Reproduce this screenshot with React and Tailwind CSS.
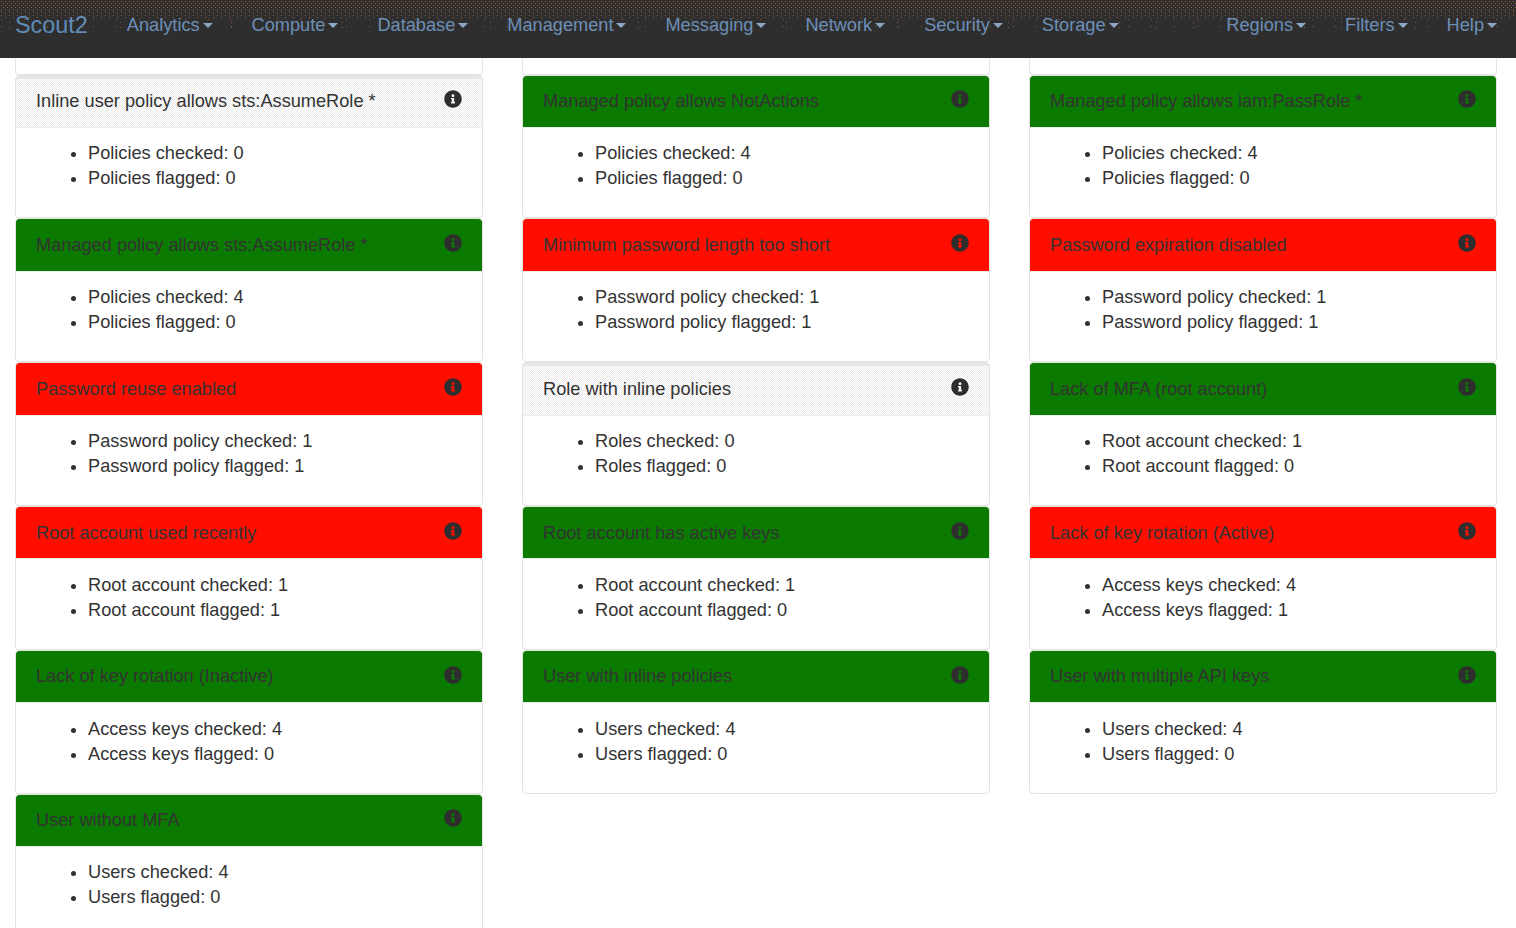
import React from "react";
import { FaInfoCircle } from "react-icons/fa";

const left = ["Analytics", "Compute", "Database", "Management", "Messaging", "Network", "Security", "Storage"];
const right = ["Regions", "Filters", "Help"];

const rows = [
  [
    ["gray", "Inline user policy allows sts:AssumeRole *", "Policies", 0, 0],
    ["green", "Managed policy allows NotActions", "Policies", 4, 0],
    ["green", "Managed policy allows iam:PassRole *", "Policies", 4, 0],
  ],
  [
    ["green", "Managed policy allows sts:AssumeRole *", "Policies", 4, 0],
    ["red", "Minimum password length too short", "Password policy", 1, 1],
    ["red", "Password expiration disabled", "Password policy", 1, 1],
  ],
  [
    ["red", "Password reuse enabled", "Password policy", 1, 1],
    ["gray", "Role with inline policies", "Roles", 0, 0],
    ["green", "Lack of MFA (root account)", "Root account", 1, 0],
  ],
  [
    ["red", "Root account used recently", "Root account", 1, 1],
    ["green", "Root account has active keys", "Root account", 1, 0],
    ["red", "Lack of key rotation (Active)", "Access keys", 4, 1],
  ],
  [
    ["green", "Lack of key rotation (Inactive)", "Access keys", 4, 0],
    ["green", "User with inline policies", "Users", 4, 0],
    ["green", "User with multiple API keys", "Users", 4, 0],
  ],
  [["green", "User without MFA", "Users", 4, 0]],
];

const headingTone = {
  gray: "border-t-[3px] border-[#e5e6e5] bg-[repeating-conic-gradient(#ffffff_0_25%,#ebebeb_0_50%)] bg-[length:2px_2px]",
  green: "bg-[#0a7a00]",
  red: "bg-[#ff0e00]",
};

function NavItem({ label }) {
  return (
    <div className="flex items-center">
      <span>{label}</span>
      <span className="ml-[3px] mt-[1px] h-0 w-0 border-x-[5px] border-t-[5px] border-x-transparent border-t-[#8ea6c6]" />
    </div>
  );
}

function Panel({ tone, title, noun, checked, flagged }) {
  return (
    <section className="h-[143.8px] overflow-hidden rounded-[4px] border border-[#e3e3e3] bg-white">
      <div className={`flex h-[51.5px] items-center justify-between rounded-t-[3px] pl-[20px] pr-[20px] ${headingTone[tone]}`}>
        <h3 className={tone === "gray" ? "-mt-[2px]" : "mt-[1px]"}>{title}</h3>
        <FaInfoCircle className={`h-[18px] w-[18px] text-[#2e2e2e] ${tone === "gray" ? "-mt-[7px]" : "-mt-[4px]"}`} />
      </div>
      <div className="border-t border-[#ececec] pl-[72px] pt-[13.4px]">
        <ul className="list-disc leading-[25px]">
          <li>{noun} checked: {checked}</li>
          <li>{noun} flagged: {flagged}</li>
        </ul>
      </div>
    </section>
  );
}

export default function App() {
  return (
    <div className="h-[928px] w-[1516px] overflow-hidden bg-white font-['Liberation_Sans',Arial,sans-serif] text-[18.2px] text-[#333333]">
      <nav className="relative flex h-[58px] items-start justify-between bg-[#2e2e2e] pl-[15px] pr-[19px] pt-[12px] leading-[26px] text-[#6c8fb8]">
        <div aria-hidden="true" className="absolute inset-x-0 top-0 h-[10px] bg-[radial-gradient(circle_at_1.5px_1.5px,#a55c3c_0.6px,transparent_0.7px),radial-gradient(circle_at_3.5px_3.5px,#a55c3c_0.6px,transparent_0.7px)] bg-[length:4px_4px]" />
        <div aria-hidden="true" className="absolute inset-x-0 top-[10px] h-[8px] bg-[radial-gradient(circle_at_1.5px_1.5px,#96583e_0.6px,transparent_0.7px),radial-gradient(circle_at_5.5px_3.5px,#96583e_0.6px,transparent_0.7px)] bg-[length:8px_4px]" />
        <div aria-hidden="true" className="absolute inset-x-0 top-[18px] h-[12px] bg-[radial-gradient(circle_at_1.5px_1.5px,#85533f_0.6px,transparent_0.7px),radial-gradient(circle_at_9.5px_4.5px,#85533f_0.6px,transparent_0.7px)] bg-[length:23px_7px,37px_5px]" />
        <div className="relative flex">
          <span className="mr-[39px] text-[23.4px] leading-[26px] text-[#5f8cb9]">Scout2</span>
          <div className="flex gap-[39px]">
            {left.map((l) => <NavItem key={l} label={l} />)}
          </div>
        </div>
        <div className="relative flex gap-[39px]">
          {right.map((l) => <NavItem key={l} label={l} />)}
        </div>
      </nav>
      <main className="pl-[15px]">
        <div className="grid w-[1482px] grid-cols-[468px_468px_468px] gap-x-[39px]">
          {[0, 1, 2].map((i) => (
            <div key={i} className="h-[16.6px] rounded-b-[4px] border-x border-b border-[#e3e3e3] bg-white" />
          ))}
          {rows.flat().map(([tone, title, noun, checked, flagged]) => (
            <Panel key={title} tone={tone} title={title} noun={noun} checked={checked} flagged={flagged} />
          ))}
        </div>
      </main>
    </div>
  );
}
